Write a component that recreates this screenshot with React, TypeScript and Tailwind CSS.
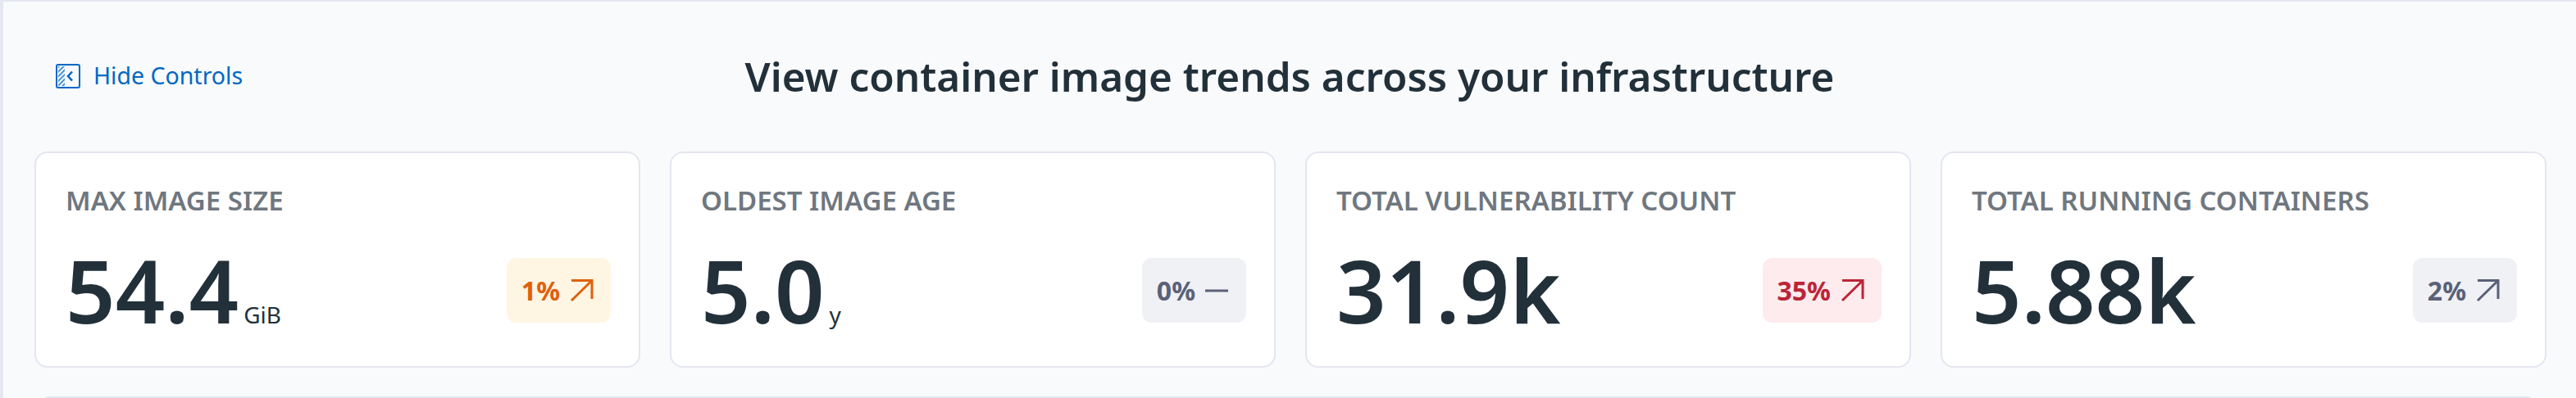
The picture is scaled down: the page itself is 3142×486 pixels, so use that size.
import React from 'react';

type Tone = 'warn' | 'neutral' | 'bad';

const metrics: { label: string; value: string; unit?: string; delta: string; tone: Tone; flat?: boolean }[] = [
  { label: 'MAX IMAGE SIZE', value: '54.4', unit: 'GiB', delta: '1%', tone: 'warn' },
  { label: 'OLDEST IMAGE AGE', value: '5.0', unit: 'y', delta: '0%', tone: 'neutral', flat: true },
  { label: 'TOTAL VULNERABILITY COUNT', value: '31.9k', delta: '35%', tone: 'bad' },
  { label: 'TOTAL RUNNING CONTAINERS', value: '5.88k', delta: '2%', tone: 'neutral' },
];

const toneClasses: Record<Tone, string> = {
  warn: 'bg-[#fff5e3] text-[#e0600d]',
  neutral: 'bg-[#f0f1f5] text-[#5a6178]',
  bad: 'bg-[#feebed] text-[#bb2538]',
};

function PanelIcon() {
  return (
    <svg width="30" height="30" viewBox="0 0 30 30" fill="none" className="shrink-0">
      <defs>
        <pattern id="hatch" width="4" height="4" patternUnits="userSpaceOnUse" patternTransform="rotate(45)">
          <rect width="2" height="4" fill="#0068c4" opacity="0.7" />
        </pattern>
      </defs>
      <rect x="3" y="3" width="8" height="24" fill="url(#hatch)" />
      <rect x="1" y="1" width="28" height="28" rx="2" stroke="#0068c4" strokeWidth="2" />
      <path d="M20 9.5 L15 15 L20 20.5" stroke="#0068c4" strokeWidth="2.6" />
    </svg>
  );
}

function DeltaArrow({ flat }: { flat?: boolean }) {
  if (flat) {
    return (
      <svg width="30" height="28" viewBox="0 0 30 28" fill="none" className="shrink-0">
        <path d="M1 14 H29" stroke="currentColor" strokeWidth="3" />
      </svg>
    );
  }
  return (
    <svg width="30" height="28" viewBox="0 0 30 28" fill="none" className="shrink-0">
      <path d="M3 26 L28 1.5 M3 1.5 H28 V24" stroke="currentColor" strokeWidth="3" />
    </svg>
  );
}

export default function App() {
  return (
    <div className="h-[486px] w-[3142px] overflow-hidden bg-[#f9fafc] border-l-[4px] border-t-[2px] border-[#e4e6f0] font-['Noto_Sans',sans-serif]">
      <div className="grid grid-cols-[1fr_auto_1fr] items-center h-[183px] pl-[64px] pr-[64px] pb-[2px]">
        <button className="flex items-center gap-[16px] text-[#0068c4] text-[28.5px] justify-self-start">
          <PanelIcon />
          Hide Controls
        </button>
        <h1 className="text-[49.4px] font-semibold leading-none text-[#22303a] whitespace-nowrap">
          View container image trends across your infrastructure
        </h1>
        <div />
      </div>
      <div className="grid grid-cols-4 gap-[36px] pl-[38px] pr-[36px]">
        {metrics.map((m) => (
          <div key={m.label} className="h-[264px] bg-white border-[2px] border-[#e4e6f0] rounded-[16px] pl-[36px] pr-[34px] pt-[36px]">
            <div className="text-[33px] leading-[44px] font-semibold text-[#6f777f] whitespace-nowrap">{m.label}</div>
            <div className="flex items-start justify-between mt-[48px]">
              <div className="flex items-baseline gap-[6px] text-[#22303a] -mt-[20px]">
                <span className="text-[106px] leading-[118px] font-semibold">{m.value}</span>
                {m.unit && <span className="text-[28px] leading-none">{m.unit}</span>}
              </div>
              <div className={`flex items-center gap-[11px] h-[79px] pl-[18px] pr-[21px] rounded-[12px] text-[32px] font-bold ${toneClasses[m.tone]}`}>
                {m.delta}
                <DeltaArrow flat={m.flat} />
              </div>
            </div>
          </div>
        ))}
      </div>
      <div className="h-[40px] ml-[42px] mr-[46px] mt-[35px] bg-white border-[2px] border-[#e4e6f0] rounded-t-[16px]" />
    </div>
  );
}
